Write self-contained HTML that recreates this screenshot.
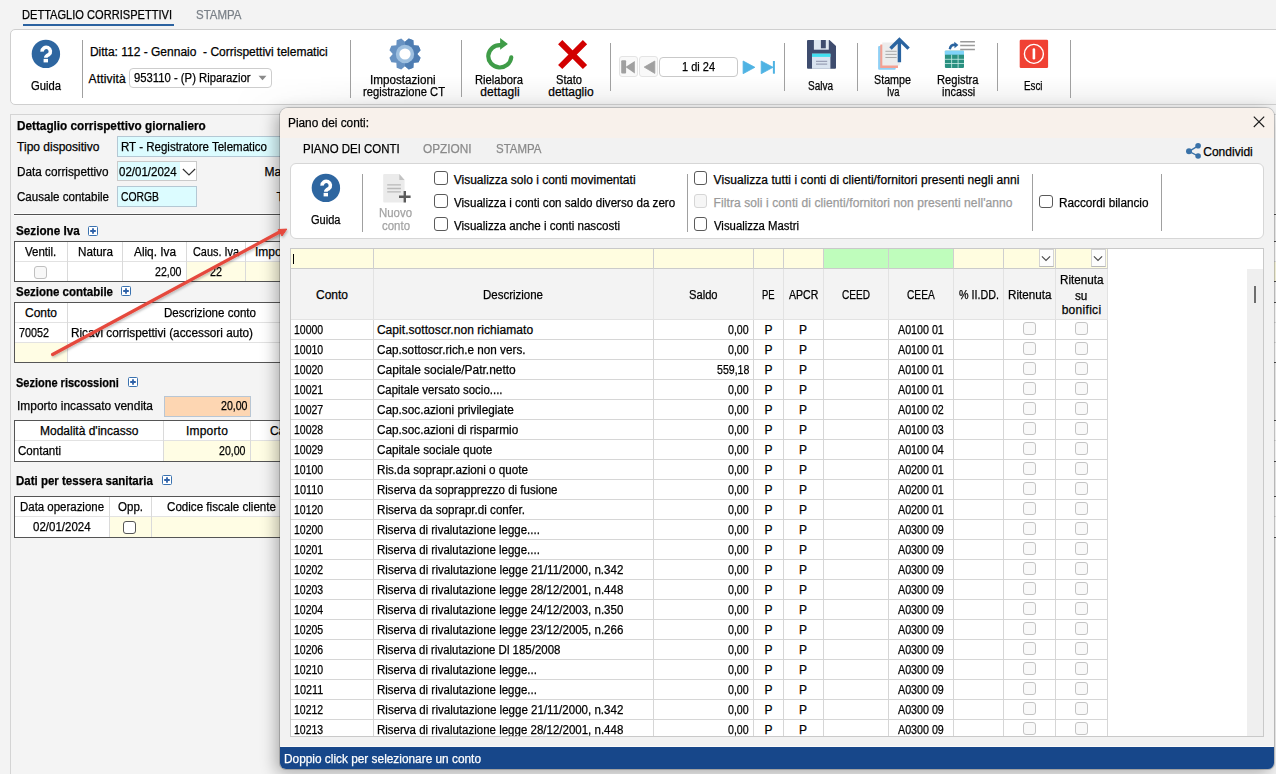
<!DOCTYPE html>
<html><head><meta charset="utf-8"><style>
html,body{margin:0;padding:0;}
body{width:1276px;height:774px;overflow:hidden;position:relative;background:#f3f3f3;font-family:"Liberation Sans", sans-serif;}
.t{position:absolute;white-space:pre;-webkit-text-stroke:0.25px currentColor;}
.r{position:absolute;box-sizing:border-box;}
svg.r{overflow:visible}
</style></head><body>
<div class="t" style="top:7.03px;font-size:12.5px;line-height:16.67px;color:#000;left:22.40px;transform-origin:0 0;transform:scaleX(0.8863);">DETTAGLIO CORRISPETTIVI</div>
<div class="t" style="top:7.03px;font-size:12.5px;line-height:16.67px;color:#7a8088;left:195.80px;transform-origin:0 0;transform:scaleX(0.9183);">STAMPA</div>
<div class="r" style="left:23px;top:24px;width:151px;height:2px;background:#2b62a0"></div>
<div class="r" style="left:10px;top:29px;width:1290px;height:74px;background:#fff;border:1px solid #cfcfcf;border-radius:5px;box-sizing:content-box"></div>
<div class="r" style="left:11px;top:30px;width:1290px;height:74px;background:linear-gradient(rgba(0,0,0,0) 0,rgba(0,0,0,0) 62%,rgba(0,0,0,0.055) 100%);-webkit-mask-image:linear-gradient(90deg,transparent 220px,#000 400px);mask-image:linear-gradient(90deg,transparent 220px,#000 400px)"></div>
<svg class="r" style="left:28px;top:36px" width="36" height="36" viewBox="0 0 36 36">
<circle cx="17.9" cy="17.9" r="14.2" fill="#2e66a0"/>
<path d="M14.1 15.6 A4.15 4.15 0 1 1 20.8 18.7 Q17.8 20.2 17.8 21.7" fill="none" stroke="#fff" stroke-width="3.6"/>
<rect x="15.6" y="22.9" width="4.4" height="3.5" fill="#fff"/></svg>
<div class="t" style="top:78.14px;font-size:12px;line-height:16.00px;color:#000;left:31.00px;transform-origin:0 0;transform:scaleX(0.9366);">Guida</div>
<div class="r" style="left:82px;top:40px;width:1px;height:58px;background:#a0a0a0"></div>
<div class="t" style="top:44.04px;font-size:12px;line-height:16.00px;color:#000;left:89.90px;transform-origin:0 0;">Ditta: 112 - Gennaio  - Corrispettivi telematici</div>
<div class="t" style="top:70.84px;font-size:12px;line-height:16.00px;color:#000;left:88.60px;transform-origin:0 0;letter-spacing:0.161px;">Attività</div>
<div class="r" style="left:129px;top:68px;width:143px;height:20px;background:#fff;border:1px solid #cdcdcd;border-radius:4px"></div>
<div class="t" style="top:70.14px;font-size:12px;line-height:16.00px;color:#000;left:133.60px;transform-origin:0 0;transform:scaleX(0.9407);">953110 - (P) Riparazior</div>
<svg class="r" style="left:258px;top:75px" width="9" height="6" viewBox="0 0 9 6"><path d="M0.5 0.8 L8.5 0.8 L4.5 5.2Z" fill="#8a8a8a"/></svg>
<div class="r" style="left:350px;top:40px;width:1px;height:58px;background:#a0a0a0"></div>
<svg class="r" style="left:385px;top:34px" width="40" height="40" viewBox="0 0 40 40">
<clipPath id="gc"><path d="M20.00 7.80 L23.74 4.44 L28.36 6.36 L28.63 11.37 L33.64 11.64 L35.56 16.26 L32.20 20.00 L35.56 23.74 L33.64 28.36 L28.63 28.63 L28.36 33.64 L23.74 35.56 L20.00 32.20 L16.26 35.56 L11.64 33.64 L11.37 28.63 L6.36 28.36 L4.44 23.74 L7.80 20.00 L4.44 16.26 L6.36 11.64 L11.37 11.37 L11.64 6.36 L16.26 4.44Z"/></clipPath>
<path d="M20.00 7.80 L23.74 4.44 L28.36 6.36 L28.63 11.37 L33.64 11.64 L35.56 16.26 L32.20 20.00 L35.56 23.74 L33.64 28.36 L28.63 28.63 L28.36 33.64 L23.74 35.56 L20.00 32.20 L16.26 35.56 L11.64 33.64 L11.37 28.63 L6.36 28.36 L4.44 23.74 L7.80 20.00 L4.44 16.26 L6.36 11.64 L11.37 11.37 L11.64 6.36 L16.26 4.44Z" fill="#6792c2"/>
<path d="M20 0 L40 0 L40 40 L20 40Z" fill="#4e7db2" clip-path="url(#gc)"/>
<circle cx="20" cy="20" r="9.2" fill="#9ec0e0"/>
<circle cx="20" cy="20" r="5.6" fill="#fff"/></svg>
<div class="t" style="top:71.54px;font-size:12px;line-height:16.00px;color:#000;left:370.25px;transform-origin:0 0;transform:scaleX(0.9722);">Impostazioni</div>
<div class="t" style="top:84.14px;font-size:12px;line-height:16.00px;color:#000;left:363.00px;transform-origin:0 0;transform:scaleX(0.9315);">registrazione CT</div>
<div class="r" style="left:461px;top:40px;width:1px;height:57px;background:#a0a0a0"></div>
<svg class="r" style="left:482px;top:36px" width="36" height="36" viewBox="0 0 36 36">
<path d="M18.6 9.1 A11.5 11.2 0 1 0 29.25 21.4" fill="none" stroke="#3f9c48" stroke-width="4.2" stroke-linecap="round"/>
<path d="M18.1 2.1 L25.9 8.1 L18.1 13.7Z" fill="#3f9c48"/></svg>
<div class="t" style="top:71.54px;font-size:12px;line-height:16.00px;color:#000;left:475.00px;transform-origin:0 0;transform:scaleX(0.9343);">Rielabora</div>
<div class="t" style="top:84.14px;font-size:12px;line-height:16.00px;color:#000;left:480.25px;transform-origin:0 0;letter-spacing:0.100px;">dettagli</div>
<svg class="r" style="left:554px;top:36px" width="36" height="36" viewBox="0 0 36 36">
<path d="M6.2 6.2 L31 31 M31 6.2 L6.2 31" stroke="#d20000" stroke-width="6"/></svg>
<div class="t" style="top:71.54px;font-size:12px;line-height:16.00px;color:#000;left:556.00px;transform-origin:0 0;transform:scaleX(0.9275);">Stato</div>
<div class="t" style="top:84.14px;font-size:12px;line-height:16.00px;color:#000;left:548.25px;transform-origin:0 0;">dettaglio</div>
<div class="r" style="left:610px;top:43px;width:1px;height:48px;background:#a0a0a0"></div>
<div class="r" style="left:618.5px;top:56.3px;width:17.5px;height:18.7px;background:#f9f9f9;border:1px solid #e4e4e4;border-radius:3px;box-sizing:content-box"></div>
<div class="r" style="left:638.7px;top:56.3px;width:17.5px;height:18.7px;background:#f9f9f9;border:1px solid #e4e4e4;border-radius:3px;box-sizing:content-box"></div>
<div class="r" style="left:658.5px;top:57.2px;width:77.5px;height:17.8px;background:#fff;border:1.3px solid #c9c9c9;border-radius:4px;box-sizing:content-box"></div>
<svg class="r" style="left:614px;top:52px" width="170" height="30" viewBox="0 0 170 30">
<rect x="7.2" y="8.2" width="4.9" height="13.4" rx="1" fill="#a0a0a0"/>
<path d="M11.5 15.1 L20.8 9 L20.8 21.4Z" fill="#a0a0a0"/>
<path d="M30.2 15.1 L40.8 9 L40.8 21.4Z" fill="#a0a0a0" stroke="#a0a0a0" stroke-width="0.8" stroke-linejoin="round"/>
<path d="M129.1 9 L140.9 15.3 L129.1 21.7Z" fill="#4fb3e3" stroke="#4fb3e3" stroke-width="0.8" stroke-linejoin="round"/>
<path d="M147.2 9 L159.1 15.3 L147.2 21.7Z" fill="#4fb3e3" stroke="#4fb3e3" stroke-width="0.8" stroke-linejoin="round"/>
<rect x="158.9" y="9" width="2" height="12.7" fill="#4fb3e3"/></svg>
<div class="t" style="top:59.04px;font-size:12px;line-height:16.00px;color:#000;left:681.50px;transform-origin:0 0;transform:scaleX(0.9159);">1 di 24</div>
<div class="r" style="left:784px;top:43px;width:1px;height:48px;background:#a0a0a0"></div>
<svg class="r" style="left:803px;top:36px" width="36" height="36" viewBox="0 0 36 36">
<path d="M5 4 L26.5 4 L33 10 L33 31.8 Q33 32.8 32 32.8 L5 32.8 Q4 32.8 4 31.8 L4 5 Q4 4 5 4Z" fill="#3e4c6e"/>
<rect x="10.9" y="4" width="14.9" height="9.7" fill="#dfe7f1"/>
<rect x="17.9" y="4" width="4.9" height="8.3" fill="#3e4c6e"/>
<rect x="9" y="17.7" width="18.4" height="15.1" fill="#d9e3ef"/>
<rect x="9" y="17.7" width="18.4" height="3.2" fill="#41e0f0"/>
<rect x="13" y="24.8" width="11.2" height="1" fill="#8a90a8"/>
<rect x="13" y="27.6" width="11.2" height="1" fill="#8a90a8"/></svg>
<div class="t" style="top:78.24px;font-size:12px;line-height:16.00px;color:#000;left:807.50px;transform-origin:0 0;transform:scaleX(0.8325);">Salva</div>
<div class="r" style="left:857px;top:43px;width:1px;height:48px;background:#a0a0a0"></div>
<svg class="r" style="left:874px;top:34px" width="40" height="40" viewBox="0 0 40 40">
<rect x="4.1" y="11.9" width="17.6" height="23.8" rx="1" fill="#8fd0f5"/>
<rect x="6.2" y="10.6" width="17.8" height="23.3" rx="0.5" fill="#f4a092"/>
<rect x="8.3" y="8.5" width="17.5" height="23" fill="#ececec"/>
<path d="M11.4 17.3 H22.7 M11.4 20.4 H22.7 M11.4 23.5 H22.7" stroke="#aaaaaa" stroke-width="1"/>
<path d="M25.4 28.2 V7.5 M16.5 14.5 L25.4 5.6 L34.6 14.6" fill="none" stroke="#2a64a0" stroke-width="3.4"/></svg>
<div class="t" style="top:71.54px;font-size:12px;line-height:16.00px;color:#000;left:873.50px;transform-origin:0 0;transform:scaleX(0.8946);">Stampe</div>
<div class="t" style="top:84.14px;font-size:12px;line-height:16.00px;color:#000;left:886.75px;transform-origin:0 0;transform:scaleX(0.7805);">Iva</div>
<svg class="r" style="left:940px;top:34px" width="40" height="40" viewBox="0 0 40 40">
<rect x="4.9" y="16.8" width="19.1" height="17.1" rx="0.8" fill="#2a9080"/>
<rect x="4.9" y="16.8" width="19.1" height="3.9" fill="#7fd3f8"/>
<path d="M11.6 20.7 V33.9 M18.1 20.7 V33.9 M4.9 25.3 H24 M4.9 29.5 H24" stroke="#c8eee6" stroke-width="0.8"/>
<path d="M20.2 7.8 H34.9 M20.2 11.6 H34.9 M20.2 15.5 H34.9" stroke="#9a9a9a" stroke-width="1.5"/>
<path d="M9.8 15.2 Q10.5 10.5 15.5 10.8" fill="none" stroke="#2a64a0" stroke-width="2.4"/>
<path d="M14.3 7.8 L18.4 11 L14.5 14.2Z" fill="#2a64a0"/></svg>
<div class="t" style="top:71.54px;font-size:12px;line-height:16.00px;color:#000;left:937.25px;transform-origin:0 0;transform:scaleX(0.9287);">Registra</div>
<div class="t" style="top:84.14px;font-size:12px;line-height:16.00px;color:#000;left:941.95px;transform-origin:0 0;transform:scaleX(0.9077);">incassi</div>
<div class="r" style="left:997px;top:43px;width:1px;height:48px;background:#a0a0a0"></div>
<svg class="r" style="left:1014px;top:34px" width="40" height="40" viewBox="0 0 40 40">
<rect x="5.7" y="5.7" width="28.4" height="28.4" rx="1.3" fill="#f04133"/>
<circle cx="19.9" cy="19.9" r="9.5" fill="none" stroke="#fff" stroke-width="1.4"/>
<rect x="18.6" y="14.2" width="2.6" height="11.4" rx="1.3" fill="#fff"/></svg>
<div class="t" style="top:78.24px;font-size:12px;line-height:16.00px;color:#000;left:1024.05px;transform-origin:0 0;transform:scaleX(0.8160);">Esci</div>
<div class="r" style="left:1070px;top:40px;width:1px;height:58px;background:#a0a0a0"></div>
<div class="r" style="left:10px;top:114px;width:1290px;height:700px;background:#f4f4f4;border:1px solid #d4d4d4"></div>
<div class="t" style="top:118.24px;font-size:12px;line-height:16.00px;color:#000;font-weight:bold;left:17.10px;transform-origin:0 0;transform:scaleX(0.9792);">Dettaglio corrispettivo giornaliero</div>
<div class="t" style="top:138.84px;font-size:12px;line-height:16.00px;color:#000;left:17.10px;transform-origin:0 0;">Tipo dispositivo</div>
<div class="r" style="left:117px;top:136px;width:300px;height:21px;background:#dcfcff;border:1px solid #b4c8d4"></div>
<div class="t" style="top:138.54px;font-size:12px;line-height:16.00px;color:#000;left:120.70px;transform-origin:0 0;transform:scaleX(0.9601);">RT - Registratore Telematico</div>
<div class="t" style="top:163.74px;font-size:12px;line-height:16.00px;color:#000;left:17.10px;transform-origin:0 0;transform:scaleX(0.9799);">Data corrispettivo</div>
<div class="r" style="left:117px;top:161px;width:80px;height:20px;background:linear-gradient(90deg,#dcfcff 0,#dcfcff 80%,#fff 80%);border:1px solid #cacaca"></div>
<div class="t" style="top:164.14px;font-size:12px;line-height:16.00px;color:#000;left:118.50px;transform-origin:0 0;transform:scaleX(0.9590);">02/01/2024</div>
<svg class="r" style="left:182px;top:168px" width="14" height="8" viewBox="0 0 14 8"><path d="M0.9 1 L7 7 L13.1 1" fill="none" stroke="#333" stroke-width="1.2"/></svg>
<div class="t" style="top:188.94px;font-size:12px;line-height:16.00px;color:#000;left:17.10px;transform-origin:0 0;transform:scaleX(0.9643);">Causale contabile</div>
<div class="r" style="left:117px;top:186px;width:80px;height:21px;background:#dcfcff;border:1px solid #b4c8d4"></div>
<div class="t" style="top:189.14px;font-size:12px;line-height:16.00px;color:#000;left:121.00px;transform-origin:0 0;transform:scaleX(0.8633);">CORGB</div>
<div class="t" style="top:163.74px;font-size:12px;line-height:16.00px;color:#000;left:264.40px;transform-origin:0 0;">Matricola</div>
<div class="t" style="top:188.94px;font-size:12px;line-height:16.00px;color:#000;left:276.40px;transform-origin:0 0;">Tipo</div>
<div class="r" style="left:14px;top:213px;width:1290px;height:3px;background:#fbfbfb"></div>
<div class="r" style="left:14px;top:214px;width:1290px;height:1px;background:#505050"></div>
<div class="t" style="top:223.34px;font-size:12px;line-height:16.00px;color:#000;font-weight:bold;left:16.40px;transform-origin:0 0;transform:scaleX(0.9744);">Sezione Iva</div>
<svg class="r" style="left:88px;top:226px" width="10" height="10" viewBox="0 0 10 10">
<rect x="0.5" y="0.5" width="9" height="9" rx="1" fill="#fff" stroke="#3a72b0" stroke-width="1"/>
<path d="M5 2.2 V7.8 M2.2 5 H7.8" stroke="#2f62a8" stroke-width="1.8"/></svg>
<div class="r" style="left:14px;top:241px;width:1290px;height:41px;background:#fff;border:1px solid #555"></div>
<div class="r" style="left:186px;top:262px;width:1100px;height:19px;background:#fffde4"></div>
<div class="r" style="left:15px;top:261px;width:1290px;height:1px;background:#e2e2e2"></div>
<div class="r" style="left:67px;top:242px;width:1px;height:39px;background:#dadada"></div>
<div class="r" style="left:122px;top:242px;width:1px;height:39px;background:#dadada"></div>
<div class="r" style="left:186px;top:242px;width:1px;height:39px;background:#dadada"></div>
<div class="r" style="left:245px;top:242px;width:1px;height:39px;background:#dadada"></div>
<div class="t" style="top:244.14px;font-size:12px;line-height:16.00px;color:#000;left:25.15px;transform-origin:0 0;transform:scaleX(0.9571);">Ventil.</div>
<div class="t" style="top:244.14px;font-size:12px;line-height:16.00px;color:#000;left:77.50px;transform-origin:0 0;transform:scaleX(0.9714);">Natura</div>
<div class="t" style="top:244.14px;font-size:12px;line-height:16.00px;color:#000;left:133.50px;transform-origin:0 0;transform:scaleX(0.9839);">Aliq. Iva</div>
<div class="t" style="top:244.14px;font-size:12px;line-height:16.00px;color:#000;left:193.00px;transform-origin:0 0;transform:scaleX(0.9072);">Caus. Iva</div>
<div class="t" style="top:244.14px;font-size:12px;line-height:16.00px;color:#000;left:255.00px;transform-origin:0 0;">Importo</div>
<div class="r" style="left:34px;top:266px;width:10.5px;height:10.5px;background:#f8f8f8;border:1px solid #c0c0c0;border-radius:3px;box-sizing:content-box"></div>
<div class="t" style="top:264.14px;font-size:12px;line-height:16.00px;color:#000;left:155.10px;transform-origin:0 0;transform:scaleX(0.8824);">22,00</div>
<div class="t" style="top:264.14px;font-size:12px;line-height:16.00px;color:#000;left:210.00px;transform-origin:0 0;transform:scaleX(0.8982);">22</div>
<div class="t" style="top:284.14px;font-size:12px;line-height:16.00px;color:#000;font-weight:bold;left:16.40px;transform-origin:0 0;transform:scaleX(0.9570);">Sezione contabile</div>
<svg class="r" style="left:121px;top:286px" width="10" height="10" viewBox="0 0 10 10">
<rect x="0.5" y="0.5" width="9" height="9" rx="1" fill="#fff" stroke="#3a72b0" stroke-width="1"/>
<path d="M5 2.2 V7.8 M2.2 5 H7.8" stroke="#2f62a8" stroke-width="1.8"/></svg>
<div class="r" style="left:14px;top:302px;width:1290px;height:61px;background:#fff;border:1px solid #555"></div>
<div class="r" style="left:15px;top:343px;width:52px;height:19px;background:#fffde4"></div>
<div class="r" style="left:15px;top:322px;width:1290px;height:1px;background:#e2e2e2"></div>
<div class="r" style="left:15px;top:342px;width:1290px;height:1px;background:#e2e2e2"></div>
<div class="r" style="left:67px;top:303px;width:1px;height:59px;background:#dadada"></div>
<div class="t" style="top:305.04px;font-size:12px;line-height:16.00px;color:#000;left:25.00px;transform-origin:0 0;">Conto</div>
<div class="t" style="top:305.04px;font-size:12px;line-height:16.00px;color:#000;left:164.00px;transform-origin:0 0;transform:scaleX(0.9645);">Descrizione conto</div>
<div class="t" style="top:324.84px;font-size:12px;line-height:16.00px;color:#000;left:19.00px;transform-origin:0 0;transform:scaleX(0.8989);">70052</div>
<div class="t" style="top:324.84px;font-size:12px;line-height:16.00px;color:#000;left:70.70px;transform-origin:0 0;transform:scaleX(0.9817);">Ricavi corrispettivi (accessori auto)</div>
<div class="t" style="top:375.14px;font-size:12px;line-height:16.00px;color:#000;font-weight:bold;left:16.40px;transform-origin:0 0;transform:scaleX(0.9166);">Sezione riscossioni</div>
<svg class="r" style="left:128px;top:377px" width="10" height="10" viewBox="0 0 10 10">
<rect x="0.5" y="0.5" width="9" height="9" rx="1" fill="#fff" stroke="#3a72b0" stroke-width="1"/>
<path d="M5 2.2 V7.8 M2.2 5 H7.8" stroke="#2f62a8" stroke-width="1.8"/></svg>
<div class="t" style="top:397.94px;font-size:12px;line-height:16.00px;color:#000;left:16.80px;transform-origin:0 0;transform:scaleX(0.9945);">Importo incassato vendita</div>
<div class="r" style="left:164px;top:396px;width:87px;height:21px;background:#fdd6b2;border:1px solid #b8c6d4"></div>
<div class="t" style="top:397.54px;font-size:12px;line-height:16.00px;color:#000;left:220.50px;transform-origin:0 0;transform:scaleX(0.8824);">20,00</div>
<div class="r" style="left:14px;top:420px;width:1290px;height:42px;background:#fff;border:1px solid #555"></div>
<div class="r" style="left:164px;top:441px;width:1100px;height:20px;background:#fffde4"></div>
<div class="r" style="left:15px;top:440px;width:1290px;height:1px;background:#e2e2e2"></div>
<div class="r" style="left:163px;top:421px;width:1px;height:40px;background:#dadada"></div>
<div class="r" style="left:250px;top:421px;width:1px;height:40px;background:#dadada"></div>
<div class="t" style="top:423.34px;font-size:12px;line-height:16.00px;color:#000;left:40.00px;transform-origin:0 0;">Modalità d&#x27;incasso</div>
<div class="t" style="top:423.34px;font-size:12px;line-height:16.00px;color:#000;left:186.00px;transform-origin:0 0;letter-spacing:0.188px;">Importo</div>
<div class="t" style="top:423.34px;font-size:12px;line-height:16.00px;color:#000;left:269.90px;transform-origin:0 0;">Causale</div>
<div class="t" style="top:443.04px;font-size:12px;line-height:16.00px;color:#000;left:17.90px;transform-origin:0 0;transform:scaleX(0.9619);">Contanti</div>
<div class="t" style="top:443.04px;font-size:12px;line-height:16.00px;color:#000;left:219.20px;transform-origin:0 0;transform:scaleX(0.8824);">20,00</div>
<div class="t" style="top:473.34px;font-size:12px;line-height:16.00px;color:#000;font-weight:bold;left:16.40px;transform-origin:0 0;transform:scaleX(0.9583);">Dati per tessera sanitaria</div>
<svg class="r" style="left:162px;top:475px" width="10" height="10" viewBox="0 0 10 10">
<rect x="0.5" y="0.5" width="9" height="9" rx="1" fill="#fff" stroke="#3a72b0" stroke-width="1"/>
<path d="M5 2.2 V7.8 M2.2 5 H7.8" stroke="#2f62a8" stroke-width="1.8"/></svg>
<div class="r" style="left:14px;top:496px;width:1290px;height:42px;background:#fff;border:1px solid #555"></div>
<div class="r" style="left:110px;top:517px;width:1100px;height:20px;background:#fffde4"></div>
<div class="r" style="left:15px;top:516px;width:1290px;height:1px;background:#e2e2e2"></div>
<div class="r" style="left:109px;top:497px;width:1px;height:40px;background:#dadada"></div>
<div class="r" style="left:151px;top:497px;width:1px;height:40px;background:#dadada"></div>
<div class="t" style="top:499.14px;font-size:12px;line-height:16.00px;color:#000;left:20.00px;transform-origin:0 0;transform:scaleX(0.9539);">Data operazione</div>
<div class="t" style="top:499.14px;font-size:12px;line-height:16.00px;color:#000;left:118.00px;transform-origin:0 0;transform:scaleX(0.9610);">Opp.</div>
<div class="t" style="top:499.14px;font-size:12px;line-height:16.00px;color:#000;left:166.70px;transform-origin:0 0;transform:scaleX(0.9669);">Codice fiscale cliente</div>
<div class="t" style="top:518.84px;font-size:12px;line-height:16.00px;color:#000;left:32.70px;transform-origin:0 0;transform:scaleX(0.9590);">02/01/2024</div>
<div class="r" style="left:123px;top:521px;width:11.3px;height:11.3px;background:#fff;border:1px solid #555;border-radius:3px;box-sizing:content-box"></div>
<div class="r" style="left:280px;top:108px;width:994px;height:661px;background:#f2f2f2;border-radius:8px 8px 6px 6px;box-shadow:-4px 4px 16px rgba(0,0,0,0.30), 0 0 0 1px rgba(0,0,0,0.18);overflow:hidden"><div class="r" style="left:0;top:0;width:994px;height:29.5px;background:#f8f1eb"></div><div class="r" style="left:0;top:639px;width:994px;height:22px;background:#17478a"></div></div>
<div class="t" style="top:115.24px;font-size:12px;line-height:16.00px;color:#000;left:288.10px;transform-origin:0 0;transform:scaleX(0.9871);">Piano dei conti:</div>
<svg class="r" style="left:1252px;top:115px" width="14" height="14" viewBox="0 0 14 14"><path d="M1.8 1.6 L12.2 12 M12.2 1.6 L1.8 12" stroke="#1a1a1a" stroke-width="1.1"/></svg>
<div class="t" style="top:140.84px;font-size:12px;line-height:16.00px;color:#000;left:303.10px;transform-origin:0 0;transform:scaleX(0.9542);">PIANO DEI CONTI</div>
<div class="t" style="top:140.84px;font-size:12px;line-height:16.00px;color:#8a8a8a;left:423.40px;transform-origin:0 0;transform:scaleX(0.9849);">OPZIONI</div>
<div class="t" style="top:140.84px;font-size:12px;line-height:16.00px;color:#8a8a8a;left:495.60px;transform-origin:0 0;transform:scaleX(0.9545);">STAMPA</div>
<svg class="r" style="left:1180px;top:140px" width="22" height="22" viewBox="0 0 22 22">
<path d="M9 11.3 L18.1 5.8 M9 11.3 L18.1 16" stroke="#3a72a8" stroke-width="1.4"/>
<circle cx="9" cy="11.3" r="3" fill="#3a72a8"/><circle cx="18.1" cy="5.8" r="2.8" fill="#3a72a8"/><circle cx="18.1" cy="16" r="2.8" fill="#3a72a8"/></svg>
<div class="t" style="top:144.34px;font-size:12px;line-height:16.00px;color:#000;left:1203.20px;transform-origin:0 0;letter-spacing:0.027px;">Condividi</div>
<div class="r" style="left:290px;top:163px;width:974px;height:76px;background:#fff;border:1px solid #d6d6d6;border-radius:6px"></div>
<svg class="r" style="left:308px;top:170px" width="36" height="36" viewBox="0 0 36 36">
<circle cx="17.9" cy="17.9" r="14.2" fill="#2e66a0"/>
<path d="M14.1 15.6 A4.15 4.15 0 1 1 20.8 18.7 Q17.8 20.2 17.8 21.7" fill="none" stroke="#fff" stroke-width="3.6"/>
<rect x="15.6" y="22.9" width="4.4" height="3.5" fill="#fff"/></svg>
<div class="t" style="top:211.84px;font-size:12px;line-height:16.00px;color:#000;left:310.75px;transform-origin:0 0;transform:scaleX(0.9210);">Guida</div>
<div class="r" style="left:362px;top:174px;width:1px;height:58px;background:#a0a0a0"></div>
<svg class="r" style="left:376px;top:170px" width="40" height="36" viewBox="0 0 40 36">
<path d="M8.2 4 L23.3 4 L28.6 10 L28.6 31.6 Q28.6 32.6 27.6 32.6 L8.2 32.6 Q7.2 32.6 7.2 31.6 L7.2 5 Q7.2 4 8.2 4Z" fill="#ebebeb"/>
<path d="M23.3 4 L28.6 10 L23.3 10Z" fill="#c2c2c2"/>
<path d="M11.2 14.9 H24.9 M11.2 18.5 H24.9 M11.2 21.9 H24.9" stroke="#b9b9b9" stroke-width="1.3"/>
<path d="M28.8 21 V32.5 M23 26.7 H34.6" stroke="#5a5a5a" stroke-width="2.4"/></svg>
<div class="t" style="top:204.94px;font-size:12px;line-height:16.00px;color:#a3a3a3;left:378.50px;transform-origin:0 0;transform:scaleX(0.9514);">Nuovo</div>
<div class="t" style="top:217.54px;font-size:12px;line-height:16.00px;color:#a3a3a3;left:381.50px;transform-origin:0 0;transform:scaleX(0.9537);">conto</div>
<div class="r" style="left:434.2px;top:171.3px;width:11.5px;height:11.5px;background:#fff;border:1px solid #5a5a5a;border-radius:3px;box-sizing:content-box"></div>
<div class="t" style="top:171.84px;font-size:12px;line-height:16.00px;color:#000;left:453.70px;transform-origin:0 0;">Visualizza solo i conti movimentati</div>
<div class="r" style="left:434.2px;top:194.20000000000002px;width:11.5px;height:11.5px;background:#fff;border:1px solid #5a5a5a;border-radius:3px;box-sizing:content-box"></div>
<div class="t" style="top:194.84px;font-size:12px;line-height:16.00px;color:#000;left:453.70px;transform-origin:0 0;transform:scaleX(0.9677);">Visualizza i conti con saldo diverso da zero</div>
<div class="r" style="left:434.2px;top:217.10000000000002px;width:11.5px;height:11.5px;background:#fff;border:1px solid #5a5a5a;border-radius:3px;box-sizing:content-box"></div>
<div class="t" style="top:217.84px;font-size:12px;line-height:16.00px;color:#000;left:453.70px;transform-origin:0 0;transform:scaleX(0.9658);">Visualizza anche i conti nascosti</div>
<div class="r" style="left:687px;top:174px;width:1px;height:58px;background:#a0a0a0"></div>
<div class="r" style="left:693.9px;top:171.3px;width:11.5px;height:11.5px;background:#fff;border:1px solid #5a5a5a;border-radius:3px;box-sizing:content-box"></div>
<div class="t" style="top:171.84px;font-size:12px;line-height:16.00px;color:#000;left:713.60px;transform-origin:0 0;letter-spacing:0.062px;">Visualizza tutti i conti di clienti/fornitori presenti negli anni</div>
<div class="r" style="left:693.9px;top:194.2px;width:11.5px;height:11.5px;background:#f6f6f6;border:1px solid #d6d6d6;border-radius:3px;box-sizing:content-box"></div>
<div class="t" style="top:194.84px;font-size:12px;line-height:16.00px;color:#9a9a9a;left:713.60px;transform-origin:0 0;letter-spacing:0.094px;">Filtra soli i conti di clienti/fornitori non presenti nell&#x27;anno</div>
<div class="r" style="left:693.9px;top:217.1px;width:11.5px;height:11.5px;background:#fff;border:1px solid #5a5a5a;border-radius:3px;box-sizing:content-box"></div>
<div class="t" style="top:217.84px;font-size:12px;line-height:16.00px;color:#000;left:713.60px;transform-origin:0 0;transform:scaleX(0.9464);">Visualizza Mastri</div>
<div class="r" style="left:1032px;top:174px;width:1px;height:57px;background:#a0a0a0"></div>
<div class="r" style="left:1039.3px;top:194.8px;width:11.5px;height:11.5px;background:#fff;border:1px solid #5a5a5a;border-radius:3px;box-sizing:content-box"></div>
<div class="t" style="top:194.84px;font-size:12px;line-height:16.00px;color:#000;left:1059.20px;transform-origin:0 0;transform:scaleX(0.9793);">Raccordi bilancio</div>
<div class="r" style="left:1161px;top:174px;width:1px;height:57px;background:#a0a0a0"></div>
<div class="r" style="left:290px;top:248px;width:974px;height:489px;background:#fff;border:1px solid #c9c9c9"></div>
<div class="r" style="left:291px;top:249px;width:82px;height:19px;background:#fffde0"></div>
<div class="r" style="left:374px;top:249px;width:279px;height:19px;background:#fffde0"></div>
<div class="r" style="left:654px;top:249px;width:99px;height:19px;background:#fffde0"></div>
<div class="r" style="left:754px;top:249px;width:29px;height:19px;background:#fffde0"></div>
<div class="r" style="left:784px;top:249px;width:39px;height:19px;background:#fffde0"></div>
<div class="r" style="left:824px;top:249px;width:64px;height:19px;background:#bffdbc"></div>
<div class="r" style="left:889px;top:249px;width:64px;height:19px;background:#bffdbc"></div>
<div class="r" style="left:954px;top:249px;width:49px;height:19px;background:#fffde0"></div>
<div class="r" style="left:1004px;top:249px;width:51px;height:19px;background:#fffde0"></div>
<div class="r" style="left:1056px;top:249px;width:51px;height:19px;background:#fffde0"></div>
<div class="r" style="left:291px;top:269px;width:816px;height:50px;background:#f3f3f3"></div>
<div class="r" style="left:1247px;top:269px;width:16px;height:467px;background:#efefef"></div>
<div class="r" style="left:1254px;top:286px;width:2px;height:17px;background:#6e6e6e"></div>
<div class="r" style="left:291px;top:268px;width:817px;height:1px;background:#cbcbcb"></div>
<div class="r" style="left:291px;top:319px;width:817px;height:1px;background:#e2e2e2"></div>
<div class="r" style="left:291px;top:339px;width:817px;height:1px;background:#d6d6d6"></div>
<div class="r" style="left:291px;top:359px;width:817px;height:1px;background:#d6d6d6"></div>
<div class="r" style="left:291px;top:379px;width:817px;height:1px;background:#d6d6d6"></div>
<div class="r" style="left:291px;top:399px;width:817px;height:1px;background:#d6d6d6"></div>
<div class="r" style="left:291px;top:419px;width:817px;height:1px;background:#d6d6d6"></div>
<div class="r" style="left:291px;top:439px;width:817px;height:1px;background:#d6d6d6"></div>
<div class="r" style="left:291px;top:459px;width:817px;height:1px;background:#d6d6d6"></div>
<div class="r" style="left:291px;top:479px;width:817px;height:1px;background:#d6d6d6"></div>
<div class="r" style="left:291px;top:499px;width:817px;height:1px;background:#d6d6d6"></div>
<div class="r" style="left:291px;top:519px;width:817px;height:1px;background:#d6d6d6"></div>
<div class="r" style="left:291px;top:539px;width:817px;height:1px;background:#d6d6d6"></div>
<div class="r" style="left:291px;top:559px;width:817px;height:1px;background:#d6d6d6"></div>
<div class="r" style="left:291px;top:579px;width:817px;height:1px;background:#d6d6d6"></div>
<div class="r" style="left:291px;top:599px;width:817px;height:1px;background:#d6d6d6"></div>
<div class="r" style="left:291px;top:619px;width:817px;height:1px;background:#d6d6d6"></div>
<div class="r" style="left:291px;top:639px;width:817px;height:1px;background:#d6d6d6"></div>
<div class="r" style="left:291px;top:659px;width:817px;height:1px;background:#d6d6d6"></div>
<div class="r" style="left:291px;top:679px;width:817px;height:1px;background:#d6d6d6"></div>
<div class="r" style="left:291px;top:699px;width:817px;height:1px;background:#d6d6d6"></div>
<div class="r" style="left:291px;top:719px;width:817px;height:1px;background:#d6d6d6"></div>
<div class="r" style="left:373px;top:249px;width:1px;height:20px;background:#cfcfcf"></div>
<div class="r" style="left:373px;top:269px;width:1px;height:50px;background:#e2e2e2"></div>
<div class="r" style="left:373px;top:320px;width:1px;height:416px;background:#d6d6d6"></div>
<div class="r" style="left:653px;top:249px;width:1px;height:20px;background:#cfcfcf"></div>
<div class="r" style="left:653px;top:269px;width:1px;height:50px;background:#e2e2e2"></div>
<div class="r" style="left:653px;top:320px;width:1px;height:416px;background:#d6d6d6"></div>
<div class="r" style="left:753px;top:249px;width:1px;height:20px;background:#cfcfcf"></div>
<div class="r" style="left:753px;top:269px;width:1px;height:50px;background:#e2e2e2"></div>
<div class="r" style="left:753px;top:320px;width:1px;height:416px;background:#d6d6d6"></div>
<div class="r" style="left:783px;top:249px;width:1px;height:20px;background:#cfcfcf"></div>
<div class="r" style="left:783px;top:269px;width:1px;height:50px;background:#e2e2e2"></div>
<div class="r" style="left:783px;top:320px;width:1px;height:416px;background:#d6d6d6"></div>
<div class="r" style="left:823px;top:249px;width:1px;height:20px;background:#cfcfcf"></div>
<div class="r" style="left:823px;top:269px;width:1px;height:50px;background:#e2e2e2"></div>
<div class="r" style="left:823px;top:320px;width:1px;height:416px;background:#d6d6d6"></div>
<div class="r" style="left:888px;top:249px;width:1px;height:20px;background:#cfcfcf"></div>
<div class="r" style="left:888px;top:269px;width:1px;height:50px;background:#e2e2e2"></div>
<div class="r" style="left:888px;top:320px;width:1px;height:416px;background:#d6d6d6"></div>
<div class="r" style="left:953px;top:249px;width:1px;height:20px;background:#cfcfcf"></div>
<div class="r" style="left:953px;top:269px;width:1px;height:50px;background:#e2e2e2"></div>
<div class="r" style="left:953px;top:320px;width:1px;height:416px;background:#d6d6d6"></div>
<div class="r" style="left:1003px;top:249px;width:1px;height:20px;background:#cfcfcf"></div>
<div class="r" style="left:1003px;top:269px;width:1px;height:50px;background:#e2e2e2"></div>
<div class="r" style="left:1003px;top:320px;width:1px;height:416px;background:#d6d6d6"></div>
<div class="r" style="left:1055px;top:249px;width:1px;height:20px;background:#cfcfcf"></div>
<div class="r" style="left:1055px;top:269px;width:1px;height:50px;background:#e2e2e2"></div>
<div class="r" style="left:1055px;top:320px;width:1px;height:416px;background:#d6d6d6"></div>
<div class="r" style="left:1107px;top:249px;width:1px;height:20px;background:#cfcfcf"></div>
<div class="r" style="left:1107px;top:269px;width:1px;height:50px;background:#e2e2e2"></div>
<div class="r" style="left:1107px;top:320px;width:1px;height:416px;background:#d6d6d6"></div>
<div class="r" style="left:293px;top:254px;width:1px;height:10px;background:#000"></div>
<div class="r" style="left:1039px;top:249px;width:15px;height:18px;background:#fdfdfd;border:1px solid #d4d4d4;border-bottom-color:#b8b8b8"></div>
<svg class="r" style="left:1041px;top:255px" width="10" height="7" viewBox="0 0 10 7"><path d="M0.9 1.4 L5 5.4 L9.1 1.4" fill="none" stroke="#4a4a4a" stroke-width="1.2"/></svg>
<div class="r" style="left:1091px;top:249px;width:15px;height:18px;background:#fdfdfd;border:1px solid #d4d4d4;border-bottom-color:#b8b8b8"></div>
<svg class="r" style="left:1093px;top:255px" width="10" height="7" viewBox="0 0 10 7"><path d="M0.9 1.4 L5 5.4 L9.1 1.4" fill="none" stroke="#4a4a4a" stroke-width="1.2"/></svg>
<div class="t" style="top:287.44px;font-size:12px;line-height:16.00px;color:#000;left:316.00px;transform-origin:0 0;">Conto</div>
<div class="t" style="top:287.44px;font-size:12px;line-height:16.00px;color:#000;left:483.00px;transform-origin:0 0;transform:scaleX(0.9569);">Descrizione</div>
<div class="t" style="top:287.44px;font-size:12px;line-height:16.00px;color:#000;left:689.20px;transform-origin:0 0;transform:scaleX(0.9315);">Saldo</div>
<div class="t" style="top:287.44px;font-size:12px;line-height:16.00px;color:#000;left:762.20px;transform-origin:0 0;transform:scaleX(0.7867);">PE</div>
<div class="t" style="top:287.44px;font-size:12px;line-height:16.00px;color:#000;left:788.85px;transform-origin:0 0;transform:scaleX(0.8787);">APCR</div>
<div class="t" style="top:287.44px;font-size:12px;line-height:16.00px;color:#000;left:842.00px;transform-origin:0 0;transform:scaleX(0.8397);">CEED</div>
<div class="t" style="top:287.44px;font-size:12px;line-height:16.00px;color:#000;left:906.65px;transform-origin:0 0;transform:scaleX(0.8474);">CEEA</div>
<div class="t" style="top:287.44px;font-size:12px;line-height:16.00px;color:#000;left:958.50px;transform-origin:0 0;transform:scaleX(0.8954);">% II.DD.</div>
<div class="t" style="top:287.44px;font-size:12px;line-height:16.00px;color:#000;left:1007.80px;transform-origin:0 0;transform:scaleX(0.9708);">Ritenuta</div>
<div class="t" style="top:272.34px;font-size:12px;line-height:16.00px;color:#000;left:1059.70px;transform-origin:0 0;transform:scaleX(0.9753);">Ritenuta</div>
<div class="t" style="top:287.54px;font-size:12px;line-height:16.00px;color:#000;left:1075.30px;transform-origin:0 0;transform:scaleX(0.9773);">su</div>
<div class="t" style="top:301.94px;font-size:12px;line-height:16.00px;color:#000;left:1061.65px;transform-origin:0 0;letter-spacing:0.293px;">bonifici</div>
<div class="t" style="top:322.04px;font-size:12px;line-height:16.00px;color:#000;left:294.00px;transform-origin:0 0;transform:scaleX(0.8749);">10000</div>
<div class="t" style="top:322.04px;font-size:12px;line-height:16.00px;color:#000;left:376.90px;transform-origin:0 0;letter-spacing:0.053px;">Capit.sottoscr.non richiamato</div>
<div class="t" style="top:322.04px;font-size:12px;line-height:16.00px;color:#000;left:728.30px;transform-origin:0 0;transform:scaleX(0.8862);">0,00</div>
<div class="t" style="top:322.04px;font-size:12px;line-height:16.00px;color:#000;left:764.49px;transform-origin:0 0;">P</div>
<div class="t" style="top:322.04px;font-size:12px;line-height:16.00px;color:#000;left:798.99px;transform-origin:0 0;">P</div>
<div class="t" style="top:322.04px;font-size:12px;line-height:16.00px;color:#000;left:897.60px;transform-origin:0 0;transform:scaleX(0.8912);">A0100 01</div>
<div class="r" style="left:1023px;top:322px;width:11px;height:11px;background:#f9f9f9;border:1px solid #c4c4c4;border-radius:3px;box-sizing:content-box"></div>
<div class="r" style="left:1075px;top:322px;width:11px;height:11px;background:#f9f9f9;border:1px solid #c4c4c4;border-radius:3px;box-sizing:content-box"></div>
<div class="t" style="top:342.04px;font-size:12px;line-height:16.00px;color:#000;left:294.00px;transform-origin:0 0;transform:scaleX(0.8749);">10010</div>
<div class="t" style="top:342.04px;font-size:12px;line-height:16.00px;color:#000;left:376.90px;transform-origin:0 0;transform:scaleX(0.9765);">Cap.sottoscr.rich.e non vers.</div>
<div class="t" style="top:342.04px;font-size:12px;line-height:16.00px;color:#000;left:728.30px;transform-origin:0 0;transform:scaleX(0.8862);">0,00</div>
<div class="t" style="top:342.04px;font-size:12px;line-height:16.00px;color:#000;left:764.49px;transform-origin:0 0;">P</div>
<div class="t" style="top:342.04px;font-size:12px;line-height:16.00px;color:#000;left:798.99px;transform-origin:0 0;">P</div>
<div class="t" style="top:342.04px;font-size:12px;line-height:16.00px;color:#000;left:897.60px;transform-origin:0 0;transform:scaleX(0.8912);">A0100 01</div>
<div class="r" style="left:1023px;top:342px;width:11px;height:11px;background:#f9f9f9;border:1px solid #c4c4c4;border-radius:3px;box-sizing:content-box"></div>
<div class="r" style="left:1075px;top:342px;width:11px;height:11px;background:#f9f9f9;border:1px solid #c4c4c4;border-radius:3px;box-sizing:content-box"></div>
<div class="t" style="top:362.04px;font-size:12px;line-height:16.00px;color:#000;left:294.00px;transform-origin:0 0;transform:scaleX(0.8749);">10020</div>
<div class="t" style="top:362.04px;font-size:12px;line-height:16.00px;color:#000;left:376.90px;transform-origin:0 0;transform:scaleX(0.9948);">Capitale sociale/Patr.netto</div>
<div class="t" style="top:362.04px;font-size:12px;line-height:16.00px;color:#000;left:716.60px;transform-origin:0 0;transform:scaleX(0.8828);">559,18</div>
<div class="t" style="top:362.04px;font-size:12px;line-height:16.00px;color:#000;left:764.49px;transform-origin:0 0;">P</div>
<div class="t" style="top:362.04px;font-size:12px;line-height:16.00px;color:#000;left:798.99px;transform-origin:0 0;">P</div>
<div class="t" style="top:362.04px;font-size:12px;line-height:16.00px;color:#000;left:897.60px;transform-origin:0 0;transform:scaleX(0.8912);">A0100 01</div>
<div class="r" style="left:1023px;top:362px;width:11px;height:11px;background:#f9f9f9;border:1px solid #c4c4c4;border-radius:3px;box-sizing:content-box"></div>
<div class="r" style="left:1075px;top:362px;width:11px;height:11px;background:#f9f9f9;border:1px solid #c4c4c4;border-radius:3px;box-sizing:content-box"></div>
<div class="t" style="top:382.04px;font-size:12px;line-height:16.00px;color:#000;left:294.00px;transform-origin:0 0;transform:scaleX(0.8749);">10021</div>
<div class="t" style="top:382.04px;font-size:12px;line-height:16.00px;color:#000;left:376.90px;transform-origin:0 0;transform:scaleX(0.9551);">Capitale versato socio....</div>
<div class="t" style="top:382.04px;font-size:12px;line-height:16.00px;color:#000;left:728.30px;transform-origin:0 0;transform:scaleX(0.8862);">0,00</div>
<div class="t" style="top:382.04px;font-size:12px;line-height:16.00px;color:#000;left:764.49px;transform-origin:0 0;">P</div>
<div class="t" style="top:382.04px;font-size:12px;line-height:16.00px;color:#000;left:798.99px;transform-origin:0 0;">P</div>
<div class="t" style="top:382.04px;font-size:12px;line-height:16.00px;color:#000;left:897.60px;transform-origin:0 0;transform:scaleX(0.8912);">A0100 01</div>
<div class="r" style="left:1023px;top:382px;width:11px;height:11px;background:#f9f9f9;border:1px solid #c4c4c4;border-radius:3px;box-sizing:content-box"></div>
<div class="r" style="left:1075px;top:382px;width:11px;height:11px;background:#f9f9f9;border:1px solid #c4c4c4;border-radius:3px;box-sizing:content-box"></div>
<div class="t" style="top:402.04px;font-size:12px;line-height:16.00px;color:#000;left:294.00px;transform-origin:0 0;transform:scaleX(0.8749);">10027</div>
<div class="t" style="top:402.04px;font-size:12px;line-height:16.00px;color:#000;left:376.90px;transform-origin:0 0;transform:scaleX(0.9806);">Cap.soc.azioni privilegiate</div>
<div class="t" style="top:402.04px;font-size:12px;line-height:16.00px;color:#000;left:728.30px;transform-origin:0 0;transform:scaleX(0.8862);">0,00</div>
<div class="t" style="top:402.04px;font-size:12px;line-height:16.00px;color:#000;left:764.49px;transform-origin:0 0;">P</div>
<div class="t" style="top:402.04px;font-size:12px;line-height:16.00px;color:#000;left:798.99px;transform-origin:0 0;">P</div>
<div class="t" style="top:402.04px;font-size:12px;line-height:16.00px;color:#000;left:897.60px;transform-origin:0 0;transform:scaleX(0.8912);">A0100 02</div>
<div class="r" style="left:1023px;top:402px;width:11px;height:11px;background:#f9f9f9;border:1px solid #c4c4c4;border-radius:3px;box-sizing:content-box"></div>
<div class="r" style="left:1075px;top:402px;width:11px;height:11px;background:#f9f9f9;border:1px solid #c4c4c4;border-radius:3px;box-sizing:content-box"></div>
<div class="t" style="top:422.04px;font-size:12px;line-height:16.00px;color:#000;left:294.00px;transform-origin:0 0;transform:scaleX(0.8749);">10028</div>
<div class="t" style="top:422.04px;font-size:12px;line-height:16.00px;color:#000;left:376.90px;transform-origin:0 0;transform:scaleX(0.9801);">Cap.soc.azioni di risparmio</div>
<div class="t" style="top:422.04px;font-size:12px;line-height:16.00px;color:#000;left:728.30px;transform-origin:0 0;transform:scaleX(0.8862);">0,00</div>
<div class="t" style="top:422.04px;font-size:12px;line-height:16.00px;color:#000;left:764.49px;transform-origin:0 0;">P</div>
<div class="t" style="top:422.04px;font-size:12px;line-height:16.00px;color:#000;left:798.99px;transform-origin:0 0;">P</div>
<div class="t" style="top:422.04px;font-size:12px;line-height:16.00px;color:#000;left:897.60px;transform-origin:0 0;transform:scaleX(0.8912);">A0100 03</div>
<div class="r" style="left:1023px;top:422px;width:11px;height:11px;background:#f9f9f9;border:1px solid #c4c4c4;border-radius:3px;box-sizing:content-box"></div>
<div class="r" style="left:1075px;top:422px;width:11px;height:11px;background:#f9f9f9;border:1px solid #c4c4c4;border-radius:3px;box-sizing:content-box"></div>
<div class="t" style="top:442.04px;font-size:12px;line-height:16.00px;color:#000;left:294.00px;transform-origin:0 0;transform:scaleX(0.8749);">10029</div>
<div class="t" style="top:442.04px;font-size:12px;line-height:16.00px;color:#000;left:376.90px;transform-origin:0 0;transform:scaleX(0.9756);">Capitale sociale quote</div>
<div class="t" style="top:442.04px;font-size:12px;line-height:16.00px;color:#000;left:728.30px;transform-origin:0 0;transform:scaleX(0.8862);">0,00</div>
<div class="t" style="top:442.04px;font-size:12px;line-height:16.00px;color:#000;left:764.49px;transform-origin:0 0;">P</div>
<div class="t" style="top:442.04px;font-size:12px;line-height:16.00px;color:#000;left:798.99px;transform-origin:0 0;">P</div>
<div class="t" style="top:442.04px;font-size:12px;line-height:16.00px;color:#000;left:897.60px;transform-origin:0 0;transform:scaleX(0.8912);">A0100 04</div>
<div class="r" style="left:1023px;top:442px;width:11px;height:11px;background:#f9f9f9;border:1px solid #c4c4c4;border-radius:3px;box-sizing:content-box"></div>
<div class="r" style="left:1075px;top:442px;width:11px;height:11px;background:#f9f9f9;border:1px solid #c4c4c4;border-radius:3px;box-sizing:content-box"></div>
<div class="t" style="top:462.04px;font-size:12px;line-height:16.00px;color:#000;left:294.00px;transform-origin:0 0;transform:scaleX(0.8749);">10100</div>
<div class="t" style="top:462.04px;font-size:12px;line-height:16.00px;color:#000;left:376.90px;transform-origin:0 0;transform:scaleX(0.9715);">Ris.da soprapr.azioni o quote</div>
<div class="t" style="top:462.04px;font-size:12px;line-height:16.00px;color:#000;left:728.30px;transform-origin:0 0;transform:scaleX(0.8862);">0,00</div>
<div class="t" style="top:462.04px;font-size:12px;line-height:16.00px;color:#000;left:764.49px;transform-origin:0 0;">P</div>
<div class="t" style="top:462.04px;font-size:12px;line-height:16.00px;color:#000;left:798.99px;transform-origin:0 0;">P</div>
<div class="t" style="top:462.04px;font-size:12px;line-height:16.00px;color:#000;left:897.60px;transform-origin:0 0;transform:scaleX(0.8912);">A0200 01</div>
<div class="r" style="left:1023px;top:462px;width:11px;height:11px;background:#f9f9f9;border:1px solid #c4c4c4;border-radius:3px;box-sizing:content-box"></div>
<div class="r" style="left:1075px;top:462px;width:11px;height:11px;background:#f9f9f9;border:1px solid #c4c4c4;border-radius:3px;box-sizing:content-box"></div>
<div class="t" style="top:482.04px;font-size:12px;line-height:16.00px;color:#000;left:294.00px;transform-origin:0 0;transform:scaleX(0.8989);">10110</div>
<div class="t" style="top:482.04px;font-size:12px;line-height:16.00px;color:#000;left:376.90px;transform-origin:0 0;transform:scaleX(0.9595);">Riserva da soprapprezzo di fusione</div>
<div class="t" style="top:482.04px;font-size:12px;line-height:16.00px;color:#000;left:728.30px;transform-origin:0 0;transform:scaleX(0.8862);">0,00</div>
<div class="t" style="top:482.04px;font-size:12px;line-height:16.00px;color:#000;left:764.49px;transform-origin:0 0;">P</div>
<div class="t" style="top:482.04px;font-size:12px;line-height:16.00px;color:#000;left:798.99px;transform-origin:0 0;">P</div>
<div class="t" style="top:482.04px;font-size:12px;line-height:16.00px;color:#000;left:897.60px;transform-origin:0 0;transform:scaleX(0.8912);">A0200 01</div>
<div class="r" style="left:1023px;top:482px;width:11px;height:11px;background:#f9f9f9;border:1px solid #c4c4c4;border-radius:3px;box-sizing:content-box"></div>
<div class="r" style="left:1075px;top:482px;width:11px;height:11px;background:#f9f9f9;border:1px solid #c4c4c4;border-radius:3px;box-sizing:content-box"></div>
<div class="t" style="top:502.04px;font-size:12px;line-height:16.00px;color:#000;left:294.00px;transform-origin:0 0;transform:scaleX(0.8749);">10120</div>
<div class="t" style="top:502.04px;font-size:12px;line-height:16.00px;color:#000;left:376.90px;transform-origin:0 0;transform:scaleX(0.9689);">Riserva da soprapr.di confer.</div>
<div class="t" style="top:502.04px;font-size:12px;line-height:16.00px;color:#000;left:728.30px;transform-origin:0 0;transform:scaleX(0.8862);">0,00</div>
<div class="t" style="top:502.04px;font-size:12px;line-height:16.00px;color:#000;left:764.49px;transform-origin:0 0;">P</div>
<div class="t" style="top:502.04px;font-size:12px;line-height:16.00px;color:#000;left:798.99px;transform-origin:0 0;">P</div>
<div class="t" style="top:502.04px;font-size:12px;line-height:16.00px;color:#000;left:897.60px;transform-origin:0 0;transform:scaleX(0.8912);">A0200 01</div>
<div class="r" style="left:1023px;top:502px;width:11px;height:11px;background:#f9f9f9;border:1px solid #c4c4c4;border-radius:3px;box-sizing:content-box"></div>
<div class="r" style="left:1075px;top:502px;width:11px;height:11px;background:#f9f9f9;border:1px solid #c4c4c4;border-radius:3px;box-sizing:content-box"></div>
<div class="t" style="top:522.04px;font-size:12px;line-height:16.00px;color:#000;left:294.00px;transform-origin:0 0;transform:scaleX(0.8749);">10200</div>
<div class="t" style="top:522.04px;font-size:12px;line-height:16.00px;color:#000;left:376.90px;transform-origin:0 0;transform:scaleX(0.9577);">Riserva di rivalutazione legge....</div>
<div class="t" style="top:522.04px;font-size:12px;line-height:16.00px;color:#000;left:728.30px;transform-origin:0 0;transform:scaleX(0.8862);">0,00</div>
<div class="t" style="top:522.04px;font-size:12px;line-height:16.00px;color:#000;left:764.49px;transform-origin:0 0;">P</div>
<div class="t" style="top:522.04px;font-size:12px;line-height:16.00px;color:#000;left:798.99px;transform-origin:0 0;">P</div>
<div class="t" style="top:522.04px;font-size:12px;line-height:16.00px;color:#000;left:897.60px;transform-origin:0 0;transform:scaleX(0.8912);">A0300 09</div>
<div class="r" style="left:1023px;top:522px;width:11px;height:11px;background:#f9f9f9;border:1px solid #c4c4c4;border-radius:3px;box-sizing:content-box"></div>
<div class="r" style="left:1075px;top:522px;width:11px;height:11px;background:#f9f9f9;border:1px solid #c4c4c4;border-radius:3px;box-sizing:content-box"></div>
<div class="t" style="top:542.04px;font-size:12px;line-height:16.00px;color:#000;left:294.00px;transform-origin:0 0;transform:scaleX(0.8749);">10201</div>
<div class="t" style="top:542.04px;font-size:12px;line-height:16.00px;color:#000;left:376.90px;transform-origin:0 0;transform:scaleX(0.9577);">Riserva di rivalutazione legge....</div>
<div class="t" style="top:542.04px;font-size:12px;line-height:16.00px;color:#000;left:728.30px;transform-origin:0 0;transform:scaleX(0.8862);">0,00</div>
<div class="t" style="top:542.04px;font-size:12px;line-height:16.00px;color:#000;left:764.49px;transform-origin:0 0;">P</div>
<div class="t" style="top:542.04px;font-size:12px;line-height:16.00px;color:#000;left:798.99px;transform-origin:0 0;">P</div>
<div class="t" style="top:542.04px;font-size:12px;line-height:16.00px;color:#000;left:897.60px;transform-origin:0 0;transform:scaleX(0.8912);">A0300 09</div>
<div class="r" style="left:1023px;top:542px;width:11px;height:11px;background:#f9f9f9;border:1px solid #c4c4c4;border-radius:3px;box-sizing:content-box"></div>
<div class="r" style="left:1075px;top:542px;width:11px;height:11px;background:#f9f9f9;border:1px solid #c4c4c4;border-radius:3px;box-sizing:content-box"></div>
<div class="t" style="top:562.04px;font-size:12px;line-height:16.00px;color:#000;left:294.00px;transform-origin:0 0;transform:scaleX(0.8749);">10202</div>
<div class="t" style="top:562.04px;font-size:12px;line-height:16.00px;color:#000;left:376.90px;transform-origin:0 0;transform:scaleX(0.9623);">Riserva di rivalutazione legge 21/11/2000, n.342</div>
<div class="t" style="top:562.04px;font-size:12px;line-height:16.00px;color:#000;left:728.30px;transform-origin:0 0;transform:scaleX(0.8862);">0,00</div>
<div class="t" style="top:562.04px;font-size:12px;line-height:16.00px;color:#000;left:764.49px;transform-origin:0 0;">P</div>
<div class="t" style="top:562.04px;font-size:12px;line-height:16.00px;color:#000;left:798.99px;transform-origin:0 0;">P</div>
<div class="t" style="top:562.04px;font-size:12px;line-height:16.00px;color:#000;left:897.60px;transform-origin:0 0;transform:scaleX(0.8912);">A0300 09</div>
<div class="r" style="left:1023px;top:562px;width:11px;height:11px;background:#f9f9f9;border:1px solid #c4c4c4;border-radius:3px;box-sizing:content-box"></div>
<div class="r" style="left:1075px;top:562px;width:11px;height:11px;background:#f9f9f9;border:1px solid #c4c4c4;border-radius:3px;box-sizing:content-box"></div>
<div class="t" style="top:582.04px;font-size:12px;line-height:16.00px;color:#000;left:294.00px;transform-origin:0 0;transform:scaleX(0.8749);">10203</div>
<div class="t" style="top:582.04px;font-size:12px;line-height:16.00px;color:#000;left:376.90px;transform-origin:0 0;transform:scaleX(0.9589);">Riserva di rivalutazione legge 28/12/2001, n.448</div>
<div class="t" style="top:582.04px;font-size:12px;line-height:16.00px;color:#000;left:728.30px;transform-origin:0 0;transform:scaleX(0.8862);">0,00</div>
<div class="t" style="top:582.04px;font-size:12px;line-height:16.00px;color:#000;left:764.49px;transform-origin:0 0;">P</div>
<div class="t" style="top:582.04px;font-size:12px;line-height:16.00px;color:#000;left:798.99px;transform-origin:0 0;">P</div>
<div class="t" style="top:582.04px;font-size:12px;line-height:16.00px;color:#000;left:897.60px;transform-origin:0 0;transform:scaleX(0.8912);">A0300 09</div>
<div class="r" style="left:1023px;top:582px;width:11px;height:11px;background:#f9f9f9;border:1px solid #c4c4c4;border-radius:3px;box-sizing:content-box"></div>
<div class="r" style="left:1075px;top:582px;width:11px;height:11px;background:#f9f9f9;border:1px solid #c4c4c4;border-radius:3px;box-sizing:content-box"></div>
<div class="t" style="top:602.04px;font-size:12px;line-height:16.00px;color:#000;left:294.00px;transform-origin:0 0;transform:scaleX(0.8749);">10204</div>
<div class="t" style="top:602.04px;font-size:12px;line-height:16.00px;color:#000;left:376.90px;transform-origin:0 0;transform:scaleX(0.9589);">Riserva di rivalutazione legge 24/12/2003, n.350</div>
<div class="t" style="top:602.04px;font-size:12px;line-height:16.00px;color:#000;left:728.30px;transform-origin:0 0;transform:scaleX(0.8862);">0,00</div>
<div class="t" style="top:602.04px;font-size:12px;line-height:16.00px;color:#000;left:764.49px;transform-origin:0 0;">P</div>
<div class="t" style="top:602.04px;font-size:12px;line-height:16.00px;color:#000;left:798.99px;transform-origin:0 0;">P</div>
<div class="t" style="top:602.04px;font-size:12px;line-height:16.00px;color:#000;left:897.60px;transform-origin:0 0;transform:scaleX(0.8912);">A0300 09</div>
<div class="r" style="left:1023px;top:602px;width:11px;height:11px;background:#f9f9f9;border:1px solid #c4c4c4;border-radius:3px;box-sizing:content-box"></div>
<div class="r" style="left:1075px;top:602px;width:11px;height:11px;background:#f9f9f9;border:1px solid #c4c4c4;border-radius:3px;box-sizing:content-box"></div>
<div class="t" style="top:622.04px;font-size:12px;line-height:16.00px;color:#000;left:294.00px;transform-origin:0 0;transform:scaleX(0.8749);">10205</div>
<div class="t" style="top:622.04px;font-size:12px;line-height:16.00px;color:#000;left:376.90px;transform-origin:0 0;transform:scaleX(0.9589);">Riserva di rivalutazione legge 23/12/2005, n.266</div>
<div class="t" style="top:622.04px;font-size:12px;line-height:16.00px;color:#000;left:728.30px;transform-origin:0 0;transform:scaleX(0.8862);">0,00</div>
<div class="t" style="top:622.04px;font-size:12px;line-height:16.00px;color:#000;left:764.49px;transform-origin:0 0;">P</div>
<div class="t" style="top:622.04px;font-size:12px;line-height:16.00px;color:#000;left:798.99px;transform-origin:0 0;">P</div>
<div class="t" style="top:622.04px;font-size:12px;line-height:16.00px;color:#000;left:897.60px;transform-origin:0 0;transform:scaleX(0.8912);">A0300 09</div>
<div class="r" style="left:1023px;top:622px;width:11px;height:11px;background:#f9f9f9;border:1px solid #c4c4c4;border-radius:3px;box-sizing:content-box"></div>
<div class="r" style="left:1075px;top:622px;width:11px;height:11px;background:#f9f9f9;border:1px solid #c4c4c4;border-radius:3px;box-sizing:content-box"></div>
<div class="t" style="top:642.04px;font-size:12px;line-height:16.00px;color:#000;left:294.00px;transform-origin:0 0;transform:scaleX(0.8749);">10206</div>
<div class="t" style="top:642.04px;font-size:12px;line-height:16.00px;color:#000;left:376.90px;transform-origin:0 0;transform:scaleX(0.9547);">Riserva di rivalutazione Dl 185/2008</div>
<div class="t" style="top:642.04px;font-size:12px;line-height:16.00px;color:#000;left:728.30px;transform-origin:0 0;transform:scaleX(0.8862);">0,00</div>
<div class="t" style="top:642.04px;font-size:12px;line-height:16.00px;color:#000;left:764.49px;transform-origin:0 0;">P</div>
<div class="t" style="top:642.04px;font-size:12px;line-height:16.00px;color:#000;left:798.99px;transform-origin:0 0;">P</div>
<div class="t" style="top:642.04px;font-size:12px;line-height:16.00px;color:#000;left:897.60px;transform-origin:0 0;transform:scaleX(0.8912);">A0300 09</div>
<div class="r" style="left:1023px;top:642px;width:11px;height:11px;background:#f9f9f9;border:1px solid #c4c4c4;border-radius:3px;box-sizing:content-box"></div>
<div class="r" style="left:1075px;top:642px;width:11px;height:11px;background:#f9f9f9;border:1px solid #c4c4c4;border-radius:3px;box-sizing:content-box"></div>
<div class="t" style="top:662.04px;font-size:12px;line-height:16.00px;color:#000;left:294.00px;transform-origin:0 0;transform:scaleX(0.8749);">10210</div>
<div class="t" style="top:662.04px;font-size:12px;line-height:16.00px;color:#000;left:376.90px;transform-origin:0 0;transform:scaleX(0.9588);">Riserva di rivalutazione legge...</div>
<div class="t" style="top:662.04px;font-size:12px;line-height:16.00px;color:#000;left:728.30px;transform-origin:0 0;transform:scaleX(0.8862);">0,00</div>
<div class="t" style="top:662.04px;font-size:12px;line-height:16.00px;color:#000;left:764.49px;transform-origin:0 0;">P</div>
<div class="t" style="top:662.04px;font-size:12px;line-height:16.00px;color:#000;left:798.99px;transform-origin:0 0;">P</div>
<div class="t" style="top:662.04px;font-size:12px;line-height:16.00px;color:#000;left:897.60px;transform-origin:0 0;transform:scaleX(0.8912);">A0300 09</div>
<div class="r" style="left:1023px;top:662px;width:11px;height:11px;background:#f9f9f9;border:1px solid #c4c4c4;border-radius:3px;box-sizing:content-box"></div>
<div class="r" style="left:1075px;top:662px;width:11px;height:11px;background:#f9f9f9;border:1px solid #c4c4c4;border-radius:3px;box-sizing:content-box"></div>
<div class="t" style="top:682.04px;font-size:12px;line-height:16.00px;color:#000;left:294.00px;transform-origin:0 0;transform:scaleX(0.8989);">10211</div>
<div class="t" style="top:682.04px;font-size:12px;line-height:16.00px;color:#000;left:376.90px;transform-origin:0 0;transform:scaleX(0.9588);">Riserva di rivalutazione legge...</div>
<div class="t" style="top:682.04px;font-size:12px;line-height:16.00px;color:#000;left:728.30px;transform-origin:0 0;transform:scaleX(0.8862);">0,00</div>
<div class="t" style="top:682.04px;font-size:12px;line-height:16.00px;color:#000;left:764.49px;transform-origin:0 0;">P</div>
<div class="t" style="top:682.04px;font-size:12px;line-height:16.00px;color:#000;left:798.99px;transform-origin:0 0;">P</div>
<div class="t" style="top:682.04px;font-size:12px;line-height:16.00px;color:#000;left:897.60px;transform-origin:0 0;transform:scaleX(0.8912);">A0300 09</div>
<div class="r" style="left:1023px;top:682px;width:11px;height:11px;background:#f9f9f9;border:1px solid #c4c4c4;border-radius:3px;box-sizing:content-box"></div>
<div class="r" style="left:1075px;top:682px;width:11px;height:11px;background:#f9f9f9;border:1px solid #c4c4c4;border-radius:3px;box-sizing:content-box"></div>
<div class="t" style="top:702.04px;font-size:12px;line-height:16.00px;color:#000;left:294.00px;transform-origin:0 0;transform:scaleX(0.8749);">10212</div>
<div class="t" style="top:702.04px;font-size:12px;line-height:16.00px;color:#000;left:376.90px;transform-origin:0 0;transform:scaleX(0.9623);">Riserva di rivalutazione legge 21/11/2000, n.342</div>
<div class="t" style="top:702.04px;font-size:12px;line-height:16.00px;color:#000;left:728.30px;transform-origin:0 0;transform:scaleX(0.8862);">0,00</div>
<div class="t" style="top:702.04px;font-size:12px;line-height:16.00px;color:#000;left:764.49px;transform-origin:0 0;">P</div>
<div class="t" style="top:702.04px;font-size:12px;line-height:16.00px;color:#000;left:798.99px;transform-origin:0 0;">P</div>
<div class="t" style="top:702.04px;font-size:12px;line-height:16.00px;color:#000;left:897.60px;transform-origin:0 0;transform:scaleX(0.8912);">A0300 09</div>
<div class="r" style="left:1023px;top:702px;width:11px;height:11px;background:#f9f9f9;border:1px solid #c4c4c4;border-radius:3px;box-sizing:content-box"></div>
<div class="r" style="left:1075px;top:702px;width:11px;height:11px;background:#f9f9f9;border:1px solid #c4c4c4;border-radius:3px;box-sizing:content-box"></div>
<div class="t" style="top:722.04px;font-size:12px;line-height:16.00px;color:#000;left:294.00px;transform-origin:0 0;transform:scaleX(0.8749);">10213</div>
<div class="t" style="top:722.04px;font-size:12px;line-height:16.00px;color:#000;left:376.90px;transform-origin:0 0;transform:scaleX(0.9589);">Riserva di rivalutazione legge 28/12/2001, n.448</div>
<div class="t" style="top:722.04px;font-size:12px;line-height:16.00px;color:#000;left:728.30px;transform-origin:0 0;transform:scaleX(0.8862);">0,00</div>
<div class="t" style="top:722.04px;font-size:12px;line-height:16.00px;color:#000;left:764.49px;transform-origin:0 0;">P</div>
<div class="t" style="top:722.04px;font-size:12px;line-height:16.00px;color:#000;left:798.99px;transform-origin:0 0;">P</div>
<div class="t" style="top:722.04px;font-size:12px;line-height:16.00px;color:#000;left:897.60px;transform-origin:0 0;transform:scaleX(0.8912);">A0300 09</div>
<div class="r" style="left:1023px;top:722px;width:11px;height:11px;background:#f9f9f9;border:1px solid #c4c4c4;border-radius:3px;box-sizing:content-box"></div>
<div class="r" style="left:1075px;top:722px;width:11px;height:11px;background:#f9f9f9;border:1px solid #c4c4c4;border-radius:3px;box-sizing:content-box"></div>
<div class="r" style="left:281px;top:737px;width:992px;height:10px;background:#f2f2f2"></div>
<div class="r" style="left:281px;top:746px;width:992px;height:1px;background:#fafafa"></div>
<div class="r" style="left:290px;top:736px;width:974px;height:1px;background:#c9c9c9"></div>
<div class="t" style="top:751.14px;font-size:12px;line-height:16.00px;color:#fff;left:284.40px;transform-origin:0 0;transform:scaleX(0.9877);">Doppio click per selezionare un conto</div>
<svg class="r" style="left:0;top:0;z-index:50" width="1276" height="774" viewBox="0 0 1276 774">
<defs><filter id="sh" x="-10%" y="-10%" width="120%" height="120%"><feDropShadow dx="1" dy="1.5" stdDeviation="1.2" flood-color="#000" flood-opacity="0.25"/></filter></defs>
<g filter="url(#sh)">
<path d="M52.6 354.5 L280.5 231.5" stroke="#e5483d" stroke-width="3.2" stroke-linecap="round"/>
<path d="M286.8 229.1 L278.2 229.5 L282 236Z" fill="#e5483d" stroke="#e5483d" stroke-width="1" stroke-linejoin="round"/>
</g></svg>
</body></html>
